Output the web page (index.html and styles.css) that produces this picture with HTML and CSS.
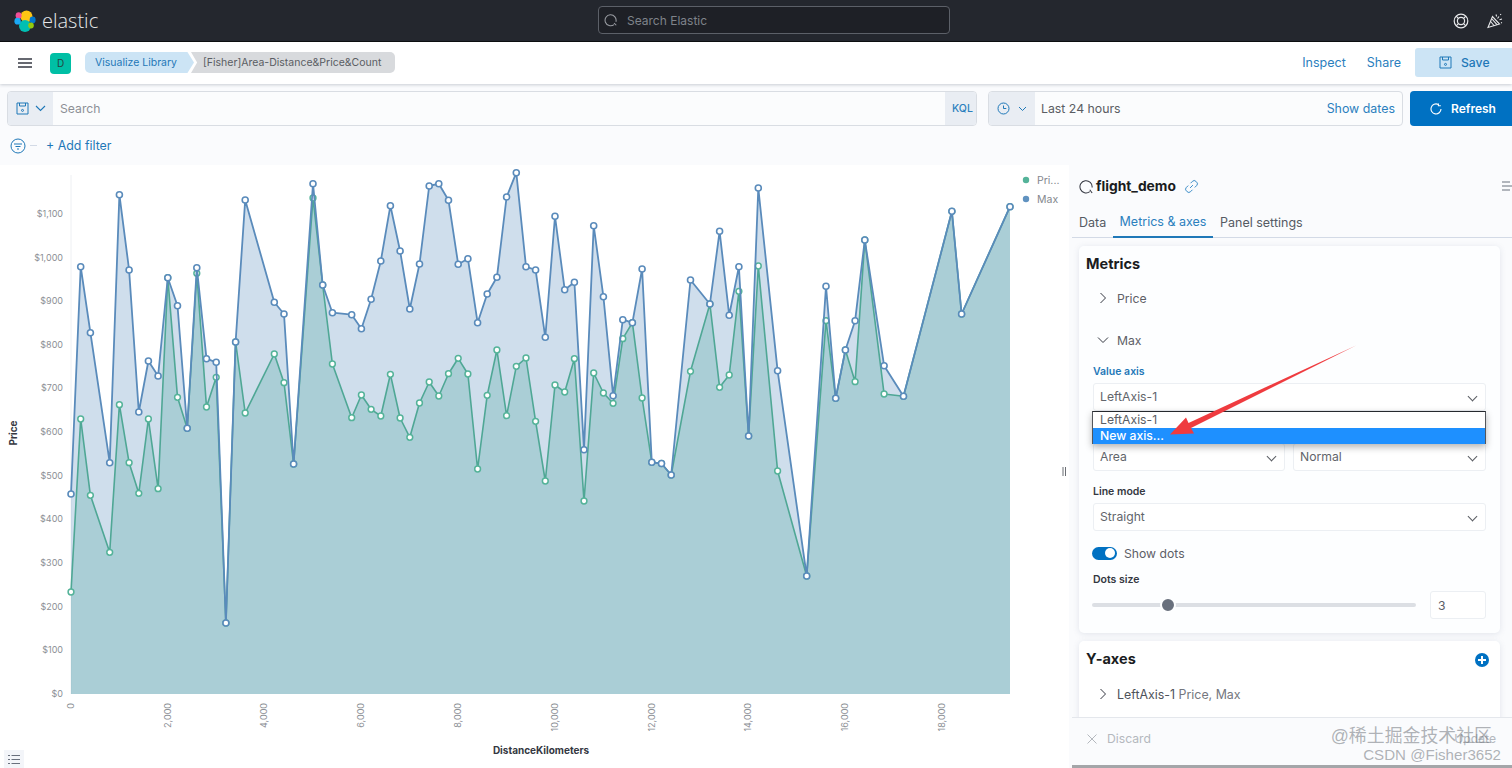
FILE: index.html
```html
<!DOCTYPE html>
<html lang="en">
<head>
<meta charset="utf-8">
<title>Visualize Library - Elastic</title>
<link rel="stylesheet" href="styles.css">
</head>
<body>
<header class="topbar">
  <div class="brand">
    <svg class="logo" width="22" height="22" viewBox="0 0 22 22">
      <circle cx="12.5" cy="6.5" r="6" fill="#fec514"/>
      <circle cx="11" cy="16" r="6" fill="#00bfb3"/>
      <ellipse cx="4.6" cy="5.6" rx="3" ry="3.4" fill="#f04e98"/>
      <ellipse cx="3.6" cy="11.2" rx="3.2" ry="3.4" fill="#1ba9f5"/>
      <ellipse cx="18.6" cy="10" rx="3" ry="3.4" fill="#0077cc"/>
      <ellipse cx="17" cy="15.6" rx="2.8" ry="3" fill="#93c90e"/>
    </svg>
    <span class="wordmark">elastic</span>
  </div>
  <div class="global-search">
    <svg width="14" height="14" viewBox="0 0 16 16" fill="none" stroke="#9a9da3" stroke-width="1.2"><path d="M11.5 13.2A6.3 6.3 0 1 1 13.6 10"/><path d="M11.5 11.5l2.5 2.5"/></svg>
    <span>Search Elastic</span>
  </div>
  <div class="top-icons">
    <svg width="16" height="16" viewBox="0 0 16 16" fill="none" stroke="#e8e9eb" stroke-width="1.2"><circle cx="8" cy="8" r="6.8"/><circle cx="8" cy="8" r="3.6"/><path d="M3.2 3.2l2.2 2.2M12.8 3.2l-2.2 2.2M3.2 12.8l2.2-2.2M12.8 12.8l-2.2-2.2"/></svg>
    <svg width="16" height="16" viewBox="0 0 16 16" fill="none" stroke="#e8e9eb" stroke-width="1.1"><path d="M1 14.5L5.5 3.5l7 7.5z"/><path d="M3.6 8.5l3.8 4.5M5 6l5 5.6"/><path d="M9 1.5l.6 2M12 3.5l-1.5 2M15 6l-2.5.8M13.5 1l.3 1M15 10l-1-.4"/></svg>
  </div>
</header>

<nav class="appbar">
  <svg class="burger" width="14" height="10" viewBox="0 0 14 10" fill="none" stroke="#343741" stroke-width="1.4"><path d="M0 1h14M0 5h14M0 9h14"/></svg>
  <span class="space">D</span>
  <div class="crumbs">
    <span class="crumb crumb-link">Visualize Library</span>
    <span class="crumb crumb-current">[Fisher]Area-Distance&amp;Price&amp;Count</span>
  </div>
  <div class="app-actions">
    <a class="action">Inspect</a>
    <a class="action">Share</a>
    <span class="save">
      <svg width="13" height="13" viewBox="0 0 13 13" fill="none" stroke="#1f78b8" stroke-width="1"><path d="M1 1h11v11H1zM3.5 1v3h6V1"/><circle cx="6.5" cy="8.4" r="1"/></svg>
      Save
    </span>
  </div>
</nav>

<section class="querybar">
  <div class="search-box">
    <span class="prepend prepend-save">
      <svg width="13" height="13" viewBox="0 0 13 13" fill="none" stroke="#1f78b8" stroke-width="1"><path d="M1 1h11v11H1zM3.5 1v3h6V1"/><circle cx="6.5" cy="8.4" r="1"/></svg>
      <svg width="11" height="7" viewBox="0 0 11 7" fill="none" stroke="#1f78b8" stroke-width="1.1"><path d="M1 1l4.5 4.5L10 1"/></svg>
    </span>
    <span class="placeholder">Search</span>
    <span class="kql">KQL</span>
  </div>
  <div class="date-box">
    <span class="prepend prepend-date">
      <svg width="13" height="13" viewBox="0 0 13 13" fill="none" stroke="#1f78b8" stroke-width="1"><circle cx="6.5" cy="6.5" r="5.5"/><path d="M6.5 3.5v3h2.8"/></svg>
      <svg width="9" height="6" viewBox="0 0 9 6" fill="none" stroke="#1f78b8" stroke-width="1"><path d="M1 1l3.5 3.5L8 1"/></svg>
    </span>
    <span class="range">Last 24 hours</span>
    <span class="show-dates">Show dates</span>
  </div>
  <span class="refresh">
    <svg width="12" height="12" viewBox="0 0 12 12" fill="none" stroke="#fff" stroke-width="1.1"><path d="M8.3 1.5A5 5 0 1 0 11 6"/><path d="M8.4 .4v2.4h2.4"/></svg>
    Refresh
  </span>
</section>

<section class="filterbar">
  <svg width="16" height="16" viewBox="0 0 16 16" fill="none" stroke="#1f78b8" stroke-width="1"><circle cx="8" cy="8" r="7"/><path d="M4 6h8M5.5 8.5h5M7 11h2"/></svg>
  <span class="filter-dash"></span>
  <a class="add-filter">+ Add filter</a>
</section>

<main class="workspace">
  <div class="chart">
    <svg class="chart-svg" width="1069" height="603" viewBox="0 165 1069 603">
      <defs>
        <marker id="dot-blue" markerWidth="9" markerHeight="9" refX="4.5" refY="4.5" markerUnits="userSpaceOnUse"><circle cx="4.5" cy="4.5" r="3" fill="#fff" stroke="#5a8bbb" stroke-width="1.6"/></marker>
        <marker id="dot-green" markerWidth="9" markerHeight="9" refX="4.5" refY="4.5" markerUnits="userSpaceOnUse"><circle cx="4.5" cy="4.5" r="2.9" fill="#fff" stroke="#54b399" stroke-width="1.5"/></marker>
      </defs>
      <line class="axis-line" x1="71" y1="175" x2="71" y2="694"/>

      <polygon class="area-green" points="71,694 71,592 80.7,419 90.4,495.3 109.7,552.3 119.4,404.7 129.1,462.7 138.8,493.3 148.4,419 158.1,488.7 167.8,277.7 177.5,397.3 187.2,428.3 196.8,273.3 206.5,407 216.2,377.3 225.9,623 235.6,342 245.2,413 274.3,354 284,382.7 293.6,464 313,198 322.7,285 332.4,364 351.7,417.7 361.4,395 371.1,409.3 380.8,416 390.4,374.3 400.1,418 409.8,437.3 419.5,403 429.2,382 438.8,396 448.5,373.7 458.2,358.3 467.9,374 477.6,469 487.2,395.3 496.9,350 506.6,415.7 516.3,366.3 526,358 535.6,421.3 545.3,481 555,385 564.7,392 574.4,358.7 584,501 593.7,373 603.4,393 613.1,403.3 622.8,338.7 632.4,322.7 642.1,398 651.8,462.3 661.5,463.5 671.2,475 690.5,371.3 709.9,304 719.6,387.3 729.2,375 738.9,291.3 748.6,436 758.3,266 777.6,471 806.7,576 826,320.7 835.7,398.3 845.4,350 855.1,381.7 864.8,240 884.1,394 903.5,396.3 951.9,211.3 961.6,314 1010,206.7 1010,694"/>
      <polygon class="area-blue" points="71,694 71,494 80.7,266.7 90.4,332.7 109.7,462.7 119.4,194.7 129.1,270 138.8,412 148.4,361 158.1,376 167.8,277.7 177.5,305.7 187.2,428.3 196.8,267.7 206.5,358.7 216.2,362.3 225.9,623 235.6,342 245.2,200 274.3,302.3 284,314 293.6,464 313,183.7 322.7,285 332.4,312.7 351.7,314.7 361.4,328.7 371.1,299.3 380.8,261 390.4,205.7 400.1,251 409.8,309 419.5,264 429.2,186 438.8,183.7 448.5,200.3 458.2,264.3 467.9,258.7 477.6,322.7 487.2,294 496.9,277.3 506.6,197 516.3,172.7 526,266.7 535.6,270 545.3,337.3 555,216.3 564.7,289.7 574.4,282.3 584,449.7 593.7,225.7 603.4,296.7 613.1,395.7 622.8,319.7 632.4,322.7 642.1,269 651.8,462.3 661.5,463.5 671.2,475 690.5,280 709.9,304 719.6,231.3 729.2,315.3 738.9,266.7 748.6,436 758.3,188 777.6,370.7 806.7,576 826,286.3 835.7,398.3 845.4,350 855.1,320.7 864.8,240 884.1,365.7 903.5,396.3 951.9,211.3 961.6,314 1010,206.7 1010,694"/>

      <polyline class="line-green" points="71,592 80.7,419 90.4,495.3 109.7,552.3 119.4,404.7 129.1,462.7 138.8,493.3 148.4,419 158.1,488.7 167.8,277.7 177.5,397.3 187.2,428.3 196.8,273.3 206.5,407 216.2,377.3 225.9,623 235.6,342 245.2,413 274.3,354 284,382.7 293.6,464 313,198 322.7,285 332.4,364 351.7,417.7 361.4,395 371.1,409.3 380.8,416 390.4,374.3 400.1,418 409.8,437.3 419.5,403 429.2,382 438.8,396 448.5,373.7 458.2,358.3 467.9,374 477.6,469 487.2,395.3 496.9,350 506.6,415.7 516.3,366.3 526,358 535.6,421.3 545.3,481 555,385 564.7,392 574.4,358.7 584,501 593.7,373 603.4,393 613.1,403.3 622.8,338.7 632.4,322.7 642.1,398 651.8,462.3 661.5,463.5 671.2,475 690.5,371.3 709.9,304 719.6,387.3 729.2,375 738.9,291.3 748.6,436 758.3,266 777.6,471 806.7,576 826,320.7 835.7,398.3 845.4,350 855.1,381.7 864.8,240 884.1,394 903.5,396.3 951.9,211.3 961.6,314 1010,206.7"/>
      <polyline class="line-blue" points="71,494 80.7,266.7 90.4,332.7 109.7,462.7 119.4,194.7 129.1,270 138.8,412 148.4,361 158.1,376 167.8,277.7 177.5,305.7 187.2,428.3 196.8,267.7 206.5,358.7 216.2,362.3 225.9,623 235.6,342 245.2,200 274.3,302.3 284,314 293.6,464 313,183.7 322.7,285 332.4,312.7 351.7,314.7 361.4,328.7 371.1,299.3 380.8,261 390.4,205.7 400.1,251 409.8,309 419.5,264 429.2,186 438.8,183.7 448.5,200.3 458.2,264.3 467.9,258.7 477.6,322.7 487.2,294 496.9,277.3 506.6,197 516.3,172.7 526,266.7 535.6,270 545.3,337.3 555,216.3 564.7,289.7 574.4,282.3 584,449.7 593.7,225.7 603.4,296.7 613.1,395.7 622.8,319.7 632.4,322.7 642.1,269 651.8,462.3 661.5,463.5 671.2,475 690.5,280 709.9,304 719.6,231.3 729.2,315.3 738.9,266.7 748.6,436 758.3,188 777.6,370.7 806.7,576 826,286.3 835.7,398.3 845.4,350 855.1,320.7 864.8,240 884.1,365.7 903.5,396.3 951.9,211.3 961.6,314 1010,206.7"/>

      <g class="tick-y">
        <text x="63" y="697">$0</text><text x="63" y="653">$100</text><text x="63" y="610">$200</text><text x="63" y="566">$300</text><text x="63" y="522">$400</text><text x="63" y="479">$500</text><text x="63" y="435">$600</text><text x="63" y="391">$700</text><text x="63" y="348">$800</text><text x="63" y="304">$900</text><text x="63" y="261">$1,000</text><text x="63" y="217">$1,100</text>
      </g>
      <g class="tick-x">
        <text transform="translate(73.5 703) rotate(-90)">0</text>
        <text transform="translate(170.5 703) rotate(-90)">2,000</text>
        <text transform="translate(267 703) rotate(-90)">4,000</text>
        <text transform="translate(364 703) rotate(-90)">6,000</text>
        <text transform="translate(461 703) rotate(-90)">8,000</text>
        <text transform="translate(558 703) rotate(-90)">10,000</text>
        <text transform="translate(654.5 703) rotate(-90)">12,000</text>
        <text transform="translate(751 703) rotate(-90)">14,000</text>
        <text transform="translate(848 703) rotate(-90)">16,000</text>
        <text transform="translate(945 703) rotate(-90)">18,000</text>
      </g>
      <text class="axis-title" transform="translate(17 433) rotate(-90)" text-anchor="middle">Price</text>
      <text class="axis-title" x="541" y="754" text-anchor="middle">DistanceKilometers</text>

      <circle cx="1026" cy="180" r="3.2" fill="#54b399"/>
      <text class="legend" x="1037" y="184">Pri...</text>
      <circle cx="1026" cy="199" r="3.2" fill="#6092c0"/>
      <text class="legend" x="1037" y="203">Max</text>

      <path class="resize-handle" d="M1063 467v9M1065.5 467v9"/>
    </svg>
    <span class="legend-toggle">
      <svg width="12" height="11" viewBox="0 0 12 11" fill="none" stroke="#69707d" stroke-width="1"><path d="M3.5 1.5H12M3.5 5.5H12M3.5 9.5H12M0 1.5h2M0 5.5h2M0 9.5h2"/></svg>
    </span>
  </div>

  <aside class="panel">
    <div class="panel-scroll">
      <div class="index-row">
        <svg width="15" height="15" viewBox="0 0 16 16" fill="none" stroke="#343741" stroke-width="1.1"><path d="M11.5 13.5A6.5 6.5 0 1 1 14 9"/><path d="M11.5 11.5L14 15"/></svg>
        <h2 class="index-name">flight_demo</h2>
        <svg width="15" height="15" viewBox="0 0 16 16" fill="none" stroke="#2d84c4" stroke-width="1"><path d="M6.5 9.5l3-3M7 4.5l2-2a2.6 2.6 0 0 1 3.7 0l.8.8a2.6 2.6 0 0 1 0 3.7l-2 2M9 11.5l-2 2a2.6 2.6 0 0 1-3.7 0l-.8-.8a2.6 2.6 0 0 1 0-3.7l2-2"/></svg>
        <svg class="collapse-icon" width="14" height="10" viewBox="0 0 14 10" fill="none" stroke="#69707d" stroke-width="1"><path d="M0 1h8M0 5h14M0 9h8M10 2l3 3-3 3"/></svg>
      </div>
      <div class="tabs">
        <span class="tab">Data</span>
        <span class="tab tab-active">Metrics &amp; axes</span>
        <span class="tab">Panel settings</span>
      </div>

      <section class="card">
        <h3 class="card-title">Metrics</h3>
        <div class="acc acc-first">
          <svg width="8" height="12" viewBox="0 0 8 12" fill="none" stroke="#343741" stroke-width="1"><path d="M1.5 1l5 5-5 5"/></svg>
          <span>Price</span>
        </div>
        <div class="acc acc-second">
          <svg class="acc-open" width="12" height="8" viewBox="0 0 12 8" fill="none" stroke="#343741" stroke-width="1"><path d="M1 1.5l5 5 5-5"/></svg>
          <span>Max</span>
        </div>
        <div class="form">
          <label class="label label-blue">Value axis</label>
          <div class="select">LeftAxis-1</div>
          <div class="two-labels"></div>
          <div class="two-col">
            <div class="select">Area</div>
            <div class="select">Normal</div>
          </div>
          <label class="label label-gap">Line mode</label>
          <div class="select">Straight</div>
          <div class="toggle-row">
            <span class="toggle"></span>
            <span>Show dots</span>
          </div>
          <label class="label label-dots">Dots size</label>
          <div class="slider-row">
            <div class="slider"><span class="thumb"></span></div>
            <div class="number">3</div>
          </div>
        </div>
      </section>

      <section class="card card-axes">
        <div class="card-head">
          <h3 class="card-title">Y-axes</h3>
          <span class="plus"></span>
        </div>
        <div class="acc acc-axis">
          <svg width="8" height="12" viewBox="0 0 8 12" fill="none" stroke="#343741" stroke-width="1"><path d="M1.5 1l5 5-5 5"/></svg>
          <span>LeftAxis-1 <em>Price, Max</em></span>
        </div>
      </section>
    </div>
    <footer class="panel-foot">
      <span class="discard">
        <svg width="10" height="10" viewBox="0 0 10 10" fill="none" stroke="#b4b8be" stroke-width="1"><path d="M.5.5l9 9M9.5.5l-9 9"/></svg>
        Discard
      </span>
      <span class="update">Update</span>
    </footer>
  </aside>
</main>

<div class="menu">
  <div class="menu-item">LeftAxis-1</div>
  <div class="menu-item menu-item-on">New axis...</div>
</div>
<svg class="arrow" width="200" height="100" viewBox="1165 340 200 100">
  <polygon points="1356,345.5 1191,428 1194,433.5 1170,434.5 1186,417.5 1188.5,423" fill="#ef3b3f"/>
</svg>
<div class="watermark">
  <span class="wm-line">@稀土掘金技术社区</span>
  <span class="wm-line">CSDN @Fisher3652</span>
</div>
</body>
</html>
```

FILE: styles.css
```css
* { box-sizing: border-box; }
html, body { margin: 0; padding: 0; }
body {
  width: 1512px;
  height: 768px;
  overflow: hidden;
  position: relative;
  background: #fafbfd;
  color: #5d6067;
  font-family: Inter, "Liberation Sans", sans-serif;
  font-size: 12.2px;
}

/* top bar */
.topbar {
  height: 42px;
  background: #24272e;
  border-bottom: 1px solid #0b0c0e;
  display: flex;
  align-items: center;
}
.brand { width: 598px; display: flex; align-items: center; padding-left: 14px; gap: 6px; }
.logo { flex: none; }
.wordmark { color: #e6e7e9; font: 300 20px "Open Sans", sans-serif; }
.global-search {
  width: 352px;
  height: 28px;
  margin-top: -1px;
  border: 1px solid #5c6068;
  border-radius: 4px;
  background: #1e2026;
  color: #7f838a;
  display: flex;
  align-items: center;
  gap: 9px;
  padding-left: 5px;
  font-size: 12px;
}
.top-icons { margin-left: auto; padding-right: 9px; display: flex; gap: 18px; }

/* app bar */
.appbar {
  height: 42px;
  background: #fff;
  box-shadow: 0 1px 3px rgba(60, 70, 90, .25);
  display: flex;
  align-items: center;
  padding-left: 18px;
  position: relative;
}
.burger { flex: none; }
.space {
  width: 21px;
  height: 21px;
  margin-left: 18px;
  border-radius: 4px;
  background: #00bfa5;
  color: #24443f;
  font-size: 10px;
  display: flex;
  align-items: center;
  justify-content: center;
}
.crumbs { display: flex; margin-left: 14px; font-size: 10.5px; margin-top: -1px; }
.crumb { height: 21px; display: flex; align-items: center; }
.crumb-link {
  width: 109px;
  padding-left: 10px;
  background: #cce4f5;
  color: #1f78b8;
  border-radius: 5px 0 0 5px;
  clip-path: polygon(0 0, 94% 0, 100% 50%, 94% 100%, 0 100%);
}
.crumb-current {
  width: 204px;
  margin-left: -3px;
  padding-left: 12px;
  background: #d8dadd;
  color: #5a5d63;
  border-radius: 0 5px 5px 0;
  clip-path: polygon(0 0, 100% 0, 100% 100%, 0 100%, 3% 50%);
}
.app-actions { margin-left: auto; display: flex; align-items: center; margin-top: -1px; font-size: 12.5px; }
.action { color: #2b80be; margin-right: 21px; }
.action + .action { margin-right: 14px; }
.save {
  width: 97px;
  height: 29px;
  background: #cce4f5;
  color: #1f78b8;
  border-radius: 3px 0 0 3px;
  display: flex;
  align-items: center;
  gap: 9px;
  padding-left: 24px;
  font-weight: 500;
  font-size: 12.2px;
}

/* query bar */
.querybar { display: flex; padding: 7px 0 0 7px; }
.search-box, .date-box {
  height: 35px;
  background: #fbfcfd;
  border: 1px solid #d9dde3;
  border-radius: 4px;
  display: flex;
  align-items: center;
  overflow: hidden;
}
.search-box { width: 970px; }
.date-box { width: 415px; margin-left: 11px; }
.prepend {
  height: 100%;
  background: #e9edf3;
  display: flex;
  align-items: center;
  flex: none;
}
.prepend-save { width: 45px; padding-left: 8px; gap: 6px; }
.prepend-date { width: 46px; padding-left: 8px; gap: 8px; }
.placeholder { margin-left: 7px; color: #8d9096; }
.kql {
  margin-left: auto;
  width: 31px;
  height: 100%;
  padding-left: 7px;
  background: #e9edf3;
  color: #2b80be;
  font-size: 10.5px;
  font-weight: 500;
  display: flex;
  align-items: center;
}
.range { margin-left: 6px; color: #5a5d63; font-size: 12.3px; }
.show-dates { margin-left: auto; margin-right: 7px; color: #2b80be; font-size: 12.4px; }
.refresh {
  width: 102px;
  height: 35px;
  margin-left: 7px;
  background: #0071c2;
  color: #fff;
  font-weight: 600;
  font-size: 12px;
  border-radius: 4px 0 0 4px;
  display: flex;
  align-items: center;
  gap: 9px;
  padding-left: 20px;
}

/* filter bar */
.filterbar { height: 39px; display: flex; align-items: center; padding-left: 10px; }
.filter-dash { width: 7px; height: 1px; background: #d3dae6; margin-left: 4px; margin-right: 9px; }
.add-filter { color: #1f78b8; font-weight: 400; font-size: 12.4px; margin-top: -1px; }

/* workspace */
.workspace { display: flex; height: 603px; }
.chart { width: 1069px; flex: none; background: #fff; position: relative; }
.chart-svg { display: block; }
.axis-line { stroke: #eef0f3; stroke-width: 1; }
.area-green { fill: #54b399; fill-opacity: .3; }
.area-blue { fill: #6092c0; fill-opacity: .3; }
.line-green, .line-blue {
  fill: none;
  stroke-linejoin: round;
}
.line-green {
  stroke: #4fa795;
  stroke-width: 1.6;
  marker-start: url(#dot-green);
  marker-mid: url(#dot-green);
  marker-end: url(#dot-green);
}
.line-blue {
  stroke: #5a8bbb;
  stroke-width: 1.8;
  marker-start: url(#dot-blue);
  marker-mid: url(#dot-blue);
  marker-end: url(#dot-blue);
}
.tick-y text { text-anchor: end; font-size: 9px; fill: #8c8f95; }
.tick-x text { text-anchor: end; font-size: 9px; fill: #8c8f95; }
.axis-title { font-size: 10px; font-weight: 700; fill: #343741; }
.legend { font-size: 10.5px; fill: #85888e; }
.resize-handle { stroke: #6b6e74; stroke-width: 1; fill: none; }
.legend-toggle {
  position: absolute;
  left: 4px;
  bottom: 0;
  width: 20px;
  height: 18px;
  background: #f3f5f9;
  display: flex;
  align-items: center;
  justify-content: center;
}

/* panel */
.panel { width: 443px; flex: none; display: flex; flex-direction: column; height: 603px; background: #fafbfd; }
.panel-scroll { flex: 1; overflow: hidden; min-height: 0; }
.index-row {
  height: 20px;
  margin-top: 11px;
  padding-left: 10px;
  display: flex;
  align-items: center;
  gap: 3px;
  overflow: hidden;
}
.index-name { margin: 0 5px 0 -1px; font-size: 13.8px; font-weight: 700; color: #1a1c21; }
.collapse-icon { margin-left: auto; margin-right: -4px; }
.tabs {
  height: 33px;
  margin: 9px 0 0 3px;
  padding: 3px 0 0 7px;
  display: flex;
  align-items: center;
  border-bottom: 1px solid #d3dae6;
  color: #555a63;
  font-size: 12.5px;
}
.tab { height: 100%; display: flex; align-items: center; margin-right: 1px; }
.tab:first-child { width: 33px; }
.tab-active {
  color: #2b80be;
  width: 100px;
  justify-content: center;
  margin-right: 7px;
  border-bottom: 2px solid #1f78b8;
  height: 30px;
}
.card {
  margin: 8px 12px 0 10px;
  padding: 9px 7px 14px;
  background: #fdfeff;
  border-radius: 5px;
  box-shadow: 0 1px 6px rgba(100, 115, 140, .16);
}
.card-axes { margin-top: 8px; background: #fff; padding-bottom: 30px; }
.card-title { margin: 0; font-size: 14.5px; line-height: 18px; font-weight: 700; color: #1a1c21; }
.card-head { display: flex; justify-content: space-between; align-items: center; }
.plus {
  width: 14px;
  height: 14px;
  margin: 1px 4px 0 0;
  border-radius: 50%;
  background:
    linear-gradient(#fff, #fff) center / 8px 2px no-repeat,
    linear-gradient(#fff, #fff) center / 2px 8px no-repeat,
    #0071c2;
}
.acc { height: 28px; display: flex; align-items: center; padding-left: 13px; gap: 10px; }
.acc-first { margin-top: 11px; }
.acc-second { margin-top: 14px; padding-left: 11px; gap: 8px; }
.acc-axis { margin-top: 12px; color: #4f535b; font-size: 12.4px; }
.acc em { font-style: normal; color: #74777e; }
.form { padding: 11px 7px 0; }
.label { display: block; font-size: 10.5px; line-height: 14px; font-weight: 600; color: #343741; }
.label-blue { color: #1f78b8; }
.label-gap { margin-top: 14px; }
.label-dots { margin-top: 13px; }
.select {
  height: 28px;
  margin-top: 4px;
  padding: 0 0 1px 6px;
  background: #fff;
  border: 1px solid #eceff3;
  border-radius: 3px;
  display: flex;
  align-items: center;
  color: #62656b;
  position: relative;
}
.select::after {
  content: "";
  position: absolute;
  right: 9px;
  top: 9px;
  width: 6px;
  height: 6px;
  border-right: 1px solid #5a5d63;
  border-bottom: 1px solid #5a5d63;
  transform: rotate(45deg);
}
.two-col { display: grid; grid-template-columns: 192px 193px; gap: 8px; }
.two-labels { height: 14px; margin-top: 14px; }
.toggle-row { margin-top: 15px; height: 14px; display: flex; align-items: center; gap: 7px; }
.toggle {
  width: 25px;
  height: 13px;
  border-radius: 7px;
  background: #0071c2;
  position: relative;
  margin-left: -1px;
}
.toggle::after {
  content: "";
  position: absolute;
  right: 2px;
  top: 1.5px;
  width: 10px;
  height: 10px;
  border-radius: 50%;
  background: #fff;
}
.slider-row { margin-top: 4px; height: 28px; display: flex; align-items: center; justify-content: space-between; }
.slider { width: 324px; height: 4px; margin-left: -1px; border-radius: 2px; background: #dcdfe4; position: relative; }
.thumb {
  position: absolute;
  left: 68px;
  top: -6px;
  width: 16px;
  height: 16px;
  border-radius: 50%;
  background: #69707d;
  border: 2.5px solid #fdfeff;
}
.number {
  width: 56px;
  height: 28px;
  background: #fff;
  border: 1px solid #eceff3;
  border-radius: 3px;
  display: flex;
  align-items: center;
  padding-left: 7px;
}
.panel-foot {
  height: 51px;
  flex: none;
  margin-left: 3px;
  background: #fafbfd;
  border-top: 1px solid #e4e7ec;
  border-bottom: 3px solid #a4a6a9;
  display: flex;
  align-items: center;
  justify-content: space-between;
  padding: 0 16px 6px 15px;
  color: #b4b8be;
}
.discard { display: flex; align-items: center; gap: 10px; }

/* overlays */
.menu {
  position: absolute;
  left: 1092px;
  top: 411px;
  width: 394px;
  height: 33px;
  background: #fff;
  border: 1px solid #53565c;
  border-top-color: #26292e;
  box-shadow: 0 3px 7px rgba(0, 0, 0, .3);
  color: #5a5d63;
}
.menu-item { height: 16px; padding: 0 0 2px 7px; display: flex; align-items: center; font-size: 12.2px; }
.menu-item-on { background: #1e90ff; color: #fff; font-weight: 500; }
.arrow { position: absolute; left: 1165px; top: 340px; }
.watermark {
  position: absolute;
  right: 11px;
  top: 727px;
  display: flex;
  flex-direction: column;
  align-items: flex-end;
  color: rgba(110, 115, 122, .55);
  font-family: "Liberation Sans", "Noto Sans CJK SC", sans-serif;
  line-height: 19px;
}
.wm-line { font-size: 15.1px; margin-top: -1px; }
.wm-line:first-child { font-size: 17.9px; margin: 0 9px 0 0; }
```
